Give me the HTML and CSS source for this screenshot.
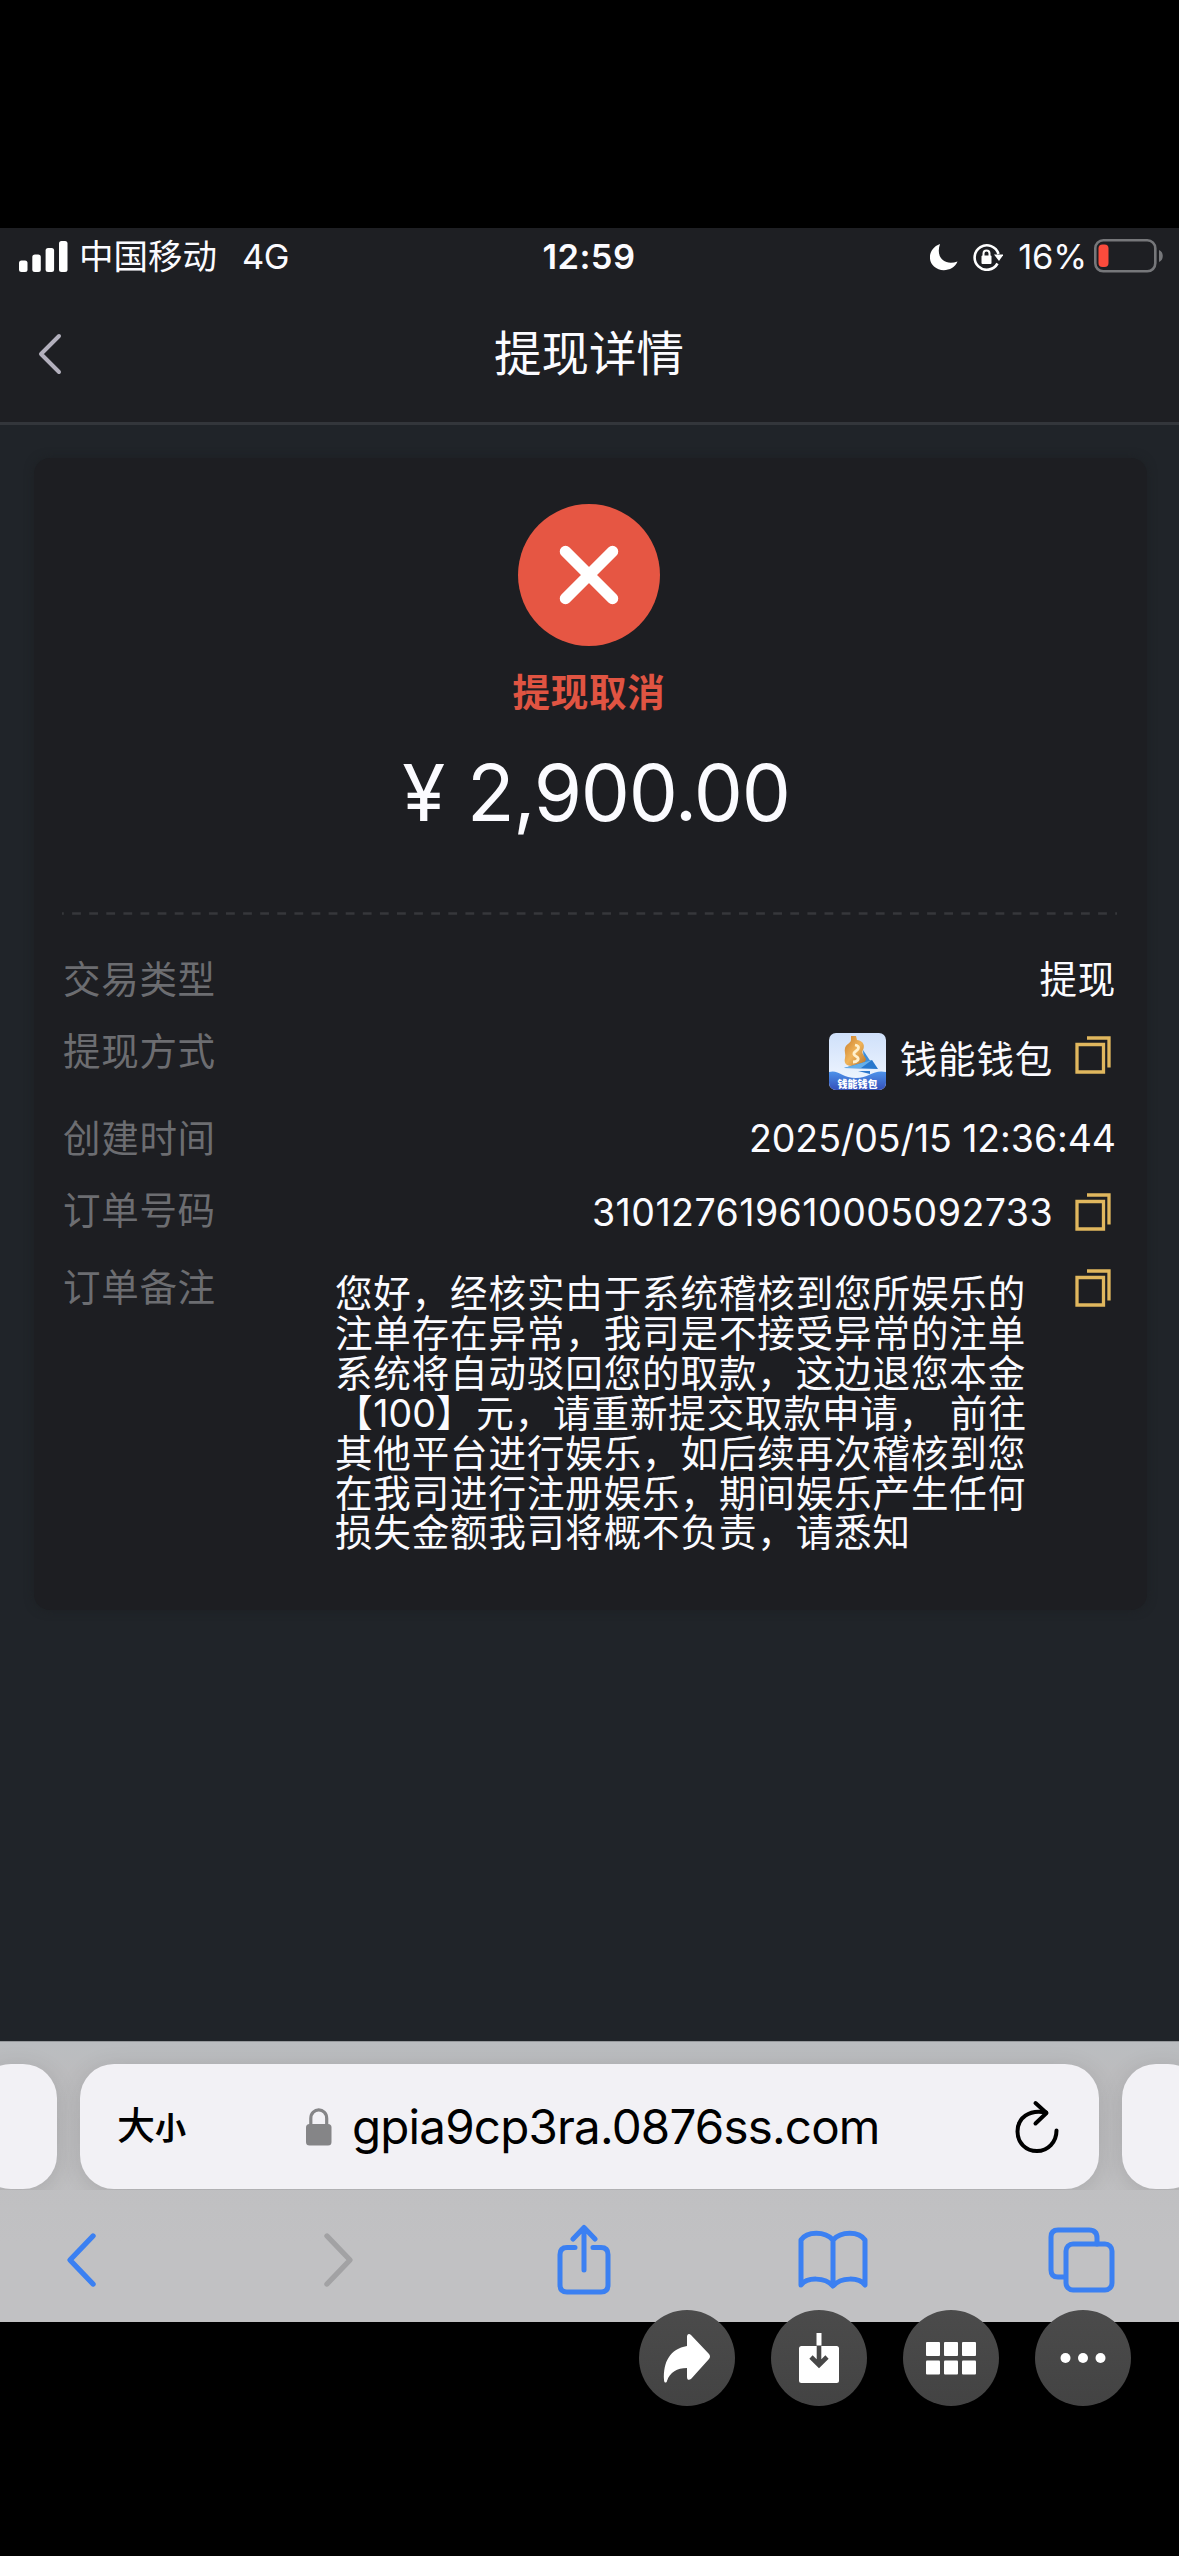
FILE: index.html
```html
<!DOCTYPE html>
<html lang="zh-CN">
<head>
<meta charset="utf-8">
<title>提现详情</title>
<link rel="stylesheet" href="styles.css">
</head>
<body>
<svg width="0" height="0" class="defs" aria-hidden="true">
  <symbol id="copy" viewBox="0 0 36 38">
    <path d="M2 8.500h26.500v27.500H2z M12 2h22V31.500" fill="none" stroke="#e0b75e" stroke-width="3.300"/>
  </symbol>
</svg>
<main class="phone">
  <div class="status">
    <div class="status-left">
      <svg width="50" height="32" viewBox="0 0 50 32" fill="#fff"><rect x="0" y="19.500" width="8.500" height="11.500" rx="2.500"/><rect x="13.300" y="13.500" width="8.500" height="17.500" rx="2.500"/><rect x="26.600" y="7" width="8.500" height="24" rx="2.500"/><rect x="40" y="0" width="8.500" height="31" rx="2.500"/></svg>
      <span class="carrier">中国移动</span>
      <span class="network">4G</span>
    </div>
    <span class="clock">12:59</span>
    <div class="status-right">
      <svg width="28" height="28" viewBox="0 0 28 28"><path d="M10 1C-1 5-3 17 4 23.500 11 30 24 27.500 27.500 18.500 14 23 5.500 14 10 1z" fill="#fff"/></svg>
      <svg class="rotation" width="30" height="28" viewBox="0 0 30 28"><path d="M24.500 20.500A12.200 12.200 0 1 1 25.500 11" fill="none" stroke="#fff" stroke-width="2.600"/><path d="M21 11.500h9.500l-4.500 6.500z" fill="#fff"/><rect x="8.500" y="12.500" width="10" height="8.500" rx="1" fill="#fff"/><path d="M10.500 13v-2.500a3 3 0 0 1 6 0V13" fill="none" stroke="#fff" stroke-width="2"/></svg>
      <span class="percent">16%</span>
      <svg class="battery" width="70" height="34" viewBox="0 0 70 34"><rect x="1.300" y="1.300" width="60" height="31" rx="8" fill="none" stroke="#76777a" stroke-width="2.600"/><rect x="4.500" y="5.500" width="10" height="22.500" rx="4" fill="#fb4b3c"/><path d="M65 11c5 1.500 5 10.500 0 12z" fill="#76777a"/></svg>
    </div>
  </div>

  <header class="nav">
    <svg class="nav-back" width="26" height="42" viewBox="0 0 26 42"><path d="M22 3L4 21l18 18" fill="none" stroke="#b3b0bd" stroke-width="4" stroke-linecap="round" stroke-linejoin="round"/></svg>
    <h1>提现详情</h1>
  </header>

  <section class="content">
    <article class="card">
      <div class="result">
        <svg width="142" height="142" viewBox="0 0 142 142"><circle cx="71" cy="71" r="71" fill="#e65643"/><path d="M47.500 47.500l47 47M94.500 47.500l-47 47" stroke="#fff" stroke-width="11.500" stroke-linecap="round"/></svg>
        <p class="result-text">提现取消</p>
        <p class="amount"><span class="yen">¥</span><span>2,900.00</span></p>
      </div>
      <svg class="divider" width="1056" height="3"><path d="M0 1.500h1056" stroke="#36373b" stroke-width="2.600" stroke-dasharray="8.800 8.300" stroke-dashoffset="7"/></svg>
      <div class="rows">
        <div class="row"><span class="label">交易类型</span><span class="value wide">提现</span></div>
        <div class="row row-wallet">
          <span class="label">提现方式</span>
          <div class="value">
            <svg class="wallet-logo" width="57" height="57" viewBox="0 0 57 57">
              <defs>
                <clipPath id="tile"><rect width="57" height="57" rx="7"/></clipPath>
                <linearGradient id="sky" x2="0" y2="1"><stop stop-color="#cfe0fa"/><stop offset="1" stop-color="#f4f9ff"/></linearGradient>
                <linearGradient id="sea" x2="0" y2="1"><stop stop-color="#4d93ea"/><stop offset="1" stop-color="#3450bb"/></linearGradient>
                <linearGradient id="gold" x2="1" y2="1"><stop stop-color="#c77c2b"/><stop offset=".5" stop-color="#f0b45a"/><stop offset="1" stop-color="#b8752c"/></linearGradient>
              </defs>
              <g clip-path="url(#tile)">
                <rect width="57" height="57" fill="url(#sky)"/>
                <path d="M34 17l8 12-7 2z" fill="#3d8fdc"/>
                <path d="M22 3h5l1 4c7 1 8 6 6 10-2 3 1 5 3 9 0 4-8 7-14 7-7 0-8-4-7-8 1-3-1-7 0-10 1-4 6-5 6-8z" fill="url(#gold)"/>
                <path d="M26 12c5 1 4 4 1 6s-3 4 1 6c3 2 0 5-4 5" fill="none" stroke="#fff0cc" stroke-width="2.800"/>
                <path d="M15 35l28-8 6 9z" fill="#2878cd"/><path d="M15 35l28-8-11 8z" fill="#66afe9"/><path d="M29 38h12v3z" fill="#2e78cc"/>
                <path d="M0 39c9-3 13 6 27 6 13 0 18-9 30-6v18H0z" fill="url(#sea)"/>
                <text x="28.500" y="54.500" text-anchor="middle" class="logo-text">钱能钱包</text>
              </g>
            </svg>
            <span class="wallet-name wide">钱能钱包</span>
            <svg class="copy lift" width="36" height="38"><use href="#copy"/></svg>
          </div>
        </div>
        <div class="row"><span class="label">创建时间</span><span class="value date">2025/05/15 12:36:44</span></div>
        <div class="row">
          <span class="label">订单号码</span>
          <div class="value"><span class="order">310127619610005092733</span><svg class="copy" width="36" height="38"><use href="#copy"/></svg></div>
        </div>
        <div class="row row-note">
          <span class="label">订单备注</span>
          <p class="note">
            <span>您好，经核实由于系统稽核到您所娱乐的</span>
            <span>注单存在异常，我司是不接受异常的注单</span>
            <span>系统将自动驳回您的取款，这边退您本金</span>
            <span>【<b>100</b>】<i>元，请重新提交取款申请，</i>前往</span>
            <span>其他平台进行娱乐，如后续再次稽核到您</span>
            <span>在我司进行注册娱乐，期间娱乐产生任何</span>
            <span>损失金额我司将概不负责，请悉知</span>
          </p>
          <svg class="copy" width="36" height="38"><use href="#copy"/></svg>
        </div>
      </div>
    </article>
  </section>

  <footer class="browser">
    <div class="tabs">
      <div class="tab"></div>
      <div class="tab address">
        <span class="text-size">大<small>小</small></span>
        <div class="site">
          <svg width="26" height="38" viewBox="0 0 26 38"><rect y="16" width="25.500" height="21.500" rx="3.500" fill="#858587"/><path d="M4.800 17v-6.500C4.800-1 20.700-1 20.700 10.500V17" fill="none" stroke="#858587" stroke-width="3.200"/></svg>
          <span class="url">gpia9cp3ra.0876ss.com</span>
        </div>
        <svg class="reload" width="44" height="54" viewBox="0 0 44 54" fill="none" stroke="#000" stroke-width="4" stroke-linecap="round" stroke-linejoin="round"><path d="M31 12.500C14 9 2.500 18 2.500 31.500 2.500 43 11 51 22 51S41.500 42 41.500 30.500"/><path d="M20.500 3L31.500 13 20.500 23.500"/></svg>
      </div>
      <div class="tab"></div>
    </div>
    <div class="tools">
      <svg width="34" height="56" viewBox="0 0 34 56"><path d="M28 4L5 28l23 24" class="line"/></svg>
      <svg class="forward" width="34" height="56" viewBox="0 0 34 56"><path d="M6 4l23 24L6 52" class="line off"/></svg>
      <svg class="share" width="56" height="72" viewBox="0 0 56 72"><path d="M19 23.500H11q-7 0-7 7V61q0 7 7 7h34q7 0 7-7V30.500q0-7-7-7H37M28 46V4M17 15L28 3.500 39 15" class="line thin"/></svg>
      <svg class="book" width="70" height="60" viewBox="0 0 70 60"><path d="M35 10C27 1 9 1 3 10v45c6-8 24-8 32 1 8-9 26-9 32-1V10C61 1 43 1 35 10zv45" class="line thin"/></svg>
      <svg class="pages" width="68" height="66" viewBox="0 0 68 66"><path d="M17 50h-6q-7 0-7-7V10q0-7 7-7h31q8 0 8 8v6" class="line thin"/><rect x="19" y="17" width="46" height="46" rx="7" class="line thin"/></svg>
    </div>
    <div class="floats">
      <button><svg width="96" height="96" viewBox="0 0 96 96"><path d="M48 27c0-3 2-4 4-2l18 19q2 2.500 0 5L52 69c-2 1.500-4 1-4-2v-9c-10 0-17 4-20 13-.600 2.500-3 2-3-1-1-18 6-31 23-34z" fill="#fff"/></svg></button>
      <button><svg width="96" height="96" viewBox="0 0 96 96"><rect x="28" y="36" width="40" height="37" rx="2.500" fill="#fff"/><path d="M48 36v20M40 47l8 8 8-8" fill="none" stroke="#474747" stroke-width="4.600"/><path d="M48 23v12.500" stroke="#fff" stroke-width="5"/></svg></button>
      <button><svg width="96" height="96" viewBox="0 0 96 96" fill="#fff"><rect x="23" y="32" width="14" height="14" rx="1"/><rect x="41" y="32" width="14" height="14" rx="1"/><rect x="59" y="32" width="14" height="14" rx="1"/><rect x="23" y="50.500" width="14" height="14" rx="1"/><rect x="41" y="50.500" width="14" height="14" rx="1"/><rect x="59" y="50.500" width="14" height="14" rx="1"/></svg></button>
      <button><svg width="96" height="96" viewBox="0 0 96 96" fill="#fff"><circle cx="30.500" cy="48" r="5"/><circle cx="48" cy="48" r="5"/><circle cx="65.500" cy="48" r="5"/></svg></button>
    </div>
  </footer>
</main>
</body>
</html>
```
FILE: styles.css
```css
* { box-sizing: border-box; margin: 0; padding: 0; }
body { background: #000; color: #fbfbff; font-family: Inter, "Noto Sans CJK SC", sans-serif; }
svg { display: block; flex: none; }
.defs { position: absolute; }
.phone { width: 1179px; height: 2556px; padding-top: 228px; overflow: hidden; }

.status { height: 57px; background: #1e1f23; display: grid; grid-template-columns: 1fr auto 1fr; align-items: center; padding: 0 15px 0 19px; white-space: nowrap; font-size: 34.500px; line-height: 57px; }
.status-left, .status-right { display: flex; align-items: center; }
.status-right { justify-content: flex-end; }
.carrier { margin-left: 10px; }
.network { margin-left: 25px; letter-spacing: -.5px; }
.clock { font-weight: 600; letter-spacing: .4px; margin: 0 5px 0 0; }
.rotation { margin-left: 15px; }
.percent { margin-left: 15px; letter-spacing: -.2px; }
.battery { margin-left: 7px; margin-top: -2px; }

.nav { height: 140px; background: #1e1f23; border-bottom: 3px solid #33363b; display: grid; grid-template-columns: 1fr auto 1fr; align-items: center; padding: 0 38px 0 37px; }
.nav h1 { font-size: 47.500px; font-weight: 400; line-height: 60px; }

.content { height: 1616px; background: #202429; padding: 33px 32px 0 34px; }
.card { height: 1152px; border-radius: 16px; background: #1d1e22; box-shadow: 0 0 10px #1d2024; padding: 46px 30px 0 28px; }
.result { height: 408px; display: flex; flex-direction: column; align-items: center; margin-left: -1px; }
.result-text { margin-top: 19px; height: 56px; line-height: 56px; font-size: 37.500px; font-weight: 700; letter-spacing: .8px; color: #e05442; }
.amount { height: 90px; margin-top: 27px; padding-left: 14px; line-height: 90px; font-size: 78px; display: flex; white-space: nowrap; letter-spacing: -1.300px; }
.yen { margin-right: 23px; }
.divider { width: 100%; }
.rows { padding: 29px 1px 0; font-size: 37.500px; line-height: 72px; }
.row { height: 72px; display: flex; justify-content: space-between; align-items: flex-start; white-space: nowrap; }
.label { color: #6c6d71; letter-spacing: .7px; }
.value { display: flex; align-items: center; height: 100%; }
.wide { letter-spacing: .8px; }
.date { letter-spacing: -.1px; }
.row-wallet { height: 87px; }
.wallet-logo { margin: 4px 14px 0 0; }
.logo-text { font: 900 10px "Noto Sans CJK SC", sans-serif; fill: #fff; }
.copy { margin: 1px 5px 0 22px; }
.copy.lift { margin-top: -9px; }
.order { letter-spacing: .45px; margin-top: 4px; }
.row-note { height: 320px; padding-top: 5px; }
.note { margin: 22px 0 0 98px; width: 719px; line-height: 39.900px; letter-spacing: .9px; }
.note span { display: block; }
.note b { font-weight: 400; letter-spacing: 0; }
.note i { font-style: normal; margin: 0 13px 0 2px; }
.row-note .copy { margin: 17px 5px 0 0; }

.browser { position: relative; height: 281px; background: linear-gradient(#babdc0, #bcbcbe 30px, #c1c1c3 200px); border-top: 1px solid #96999c; }
.tabs { display: flex; gap: 23px; padding-top: 22px; height: 148px; overflow: hidden; }
.tab { flex: none; width: 80px; height: 125px; border-radius: 34px; background: #f2f1f5; box-shadow: 0 4px 24px rgba(0,0,0,.12); }
.tab:first-child { margin-left: -23px; }
.address { width: 1019px; display: flex; align-items: center; padding: 0 40px 0 37px; color: #000; }
.text-size { font-size: 38px; font-weight: 500; line-height: 60px; width: 190px; }
.text-size small { font-size: 31px; font-weight: 700; }
.site { display: flex; align-items: center; flex: 1; margin-left: -1px; }
.url { margin-left: 20px; font-size: 47.500px; line-height: 60px; white-space: nowrap; letter-spacing: -.8px; }
.tools { height: 132px; display: flex; align-items: center; padding: 14px 64px 6px 65px; }
.forward { margin-left: 222px; }
.share { margin-left: 201px; }
.book { margin-left: 186px; }
.pages { margin-left: 179px; }
.line { fill: none; stroke: #3b80f2; stroke-width: 5.400; stroke-linecap: round; stroke-linejoin: round; }
.thin { stroke-width: 5; }
.off { stroke: #a2a2a4; }
.floats { position: absolute; top: 268px; left: 639px; display: flex; gap: 36px; }
.floats button { width: 96px; height: 96px; border: 0; border-radius: 50%; background: linear-gradient(#4b4b4b, #434343); }
```
